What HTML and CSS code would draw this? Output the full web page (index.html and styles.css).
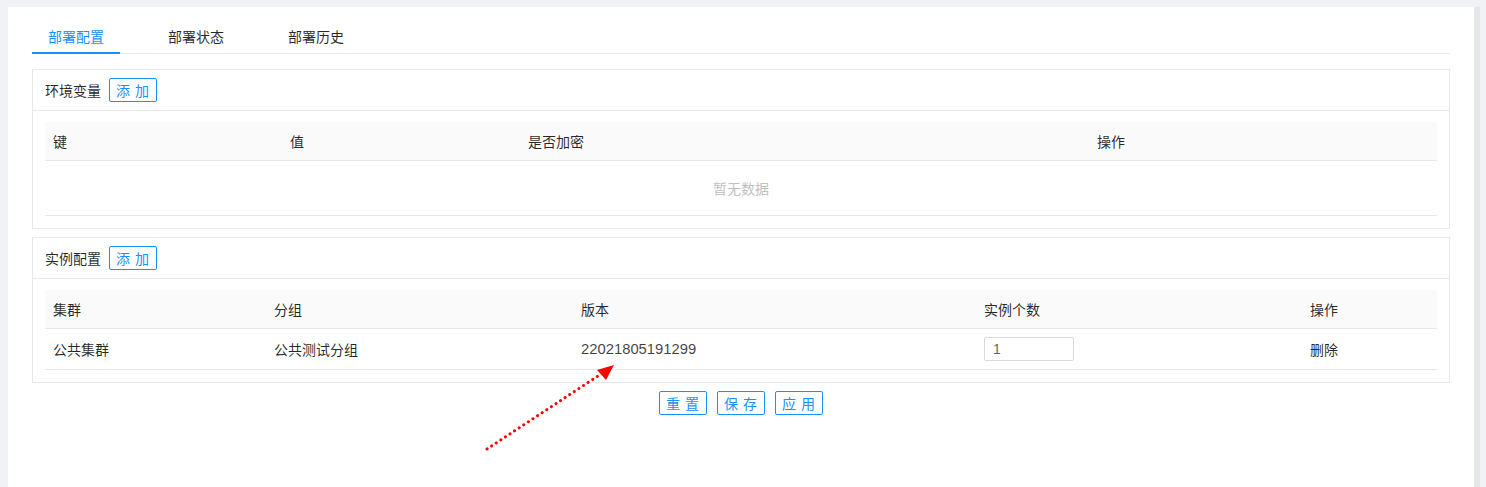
FILE: index.html
```html
<!DOCTYPE html>
<html lang="zh-CN">
<head>
<meta charset="utf-8">
<title>部署配置</title>
<link rel="stylesheet" href="styles.css">
</head>
<body>
<div class="page">
  <div class="panel">
    <div class="tabs">
      <div class="tab active">部署配置</div>
      <div class="tab">部署状态</div>
      <div class="tab">部署历史</div>
    </div>

    <div class="card">
      <div class="card-head">
        <span class="card-title">环境变量</span>
        <button class="btn">添 加</button>
      </div>
      <div class="card-body">
        <table class="tbl">
          <colgroup><col class="c1a"><col class="c1b"><col class="c1c"><col class="c1d"></colgroup>
          <thead><tr><th>键</th><th>值</th><th>是否加密</th><th>操作</th></tr></thead>
          <tbody><tr><td colspan="4" class="empty">暂无数据</td></tr></tbody>
        </table>
      </div>
    </div>

    <div class="card">
      <div class="card-head">
        <span class="card-title">实例配置</span>
        <button class="btn">添 加</button>
      </div>
      <div class="card-body">
        <table class="tbl">
          <colgroup><col class="c2a"><col class="c2b"><col class="c2c"><col class="c2d"><col class="c2e"></colgroup>
          <thead><tr><th>集群</th><th>分组</th><th>版本</th><th>实例个数</th><th>操作</th></tr></thead>
          <tbody><tr>
            <td>公共集群</td><td>公共测试分组</td><td class="num">22021805191299</td>
            <td><input class="inp" type="text" value="1"></td><td>删除</td>
          </tr></tbody>
        </table>
      </div>
    </div>

    <div class="actions">
      <button class="btn">重 置</button>
      <button class="btn">保 存</button>
      <button class="btn">应 用</button>
    </div>

    <svg class="arrow" width="1486" height="487" viewBox="0 0 1486 487">
      <line x1="487" y1="449" x2="601" y2="374" stroke="#ff0000" stroke-width="3" stroke-linecap="round" stroke-dasharray="0.1 5.4"/>
      <polygon points="614,365 597,370 606,380" fill="#ff0000"/>
    </svg>
  </div>
  <div class="scroll"></div>
</div>
</body>
</html>
```
FILE: styles.css
```css
* { box-sizing: border-box; }
html, body { margin: 0; padding: 0; }
body {
  background: #f0f2f5;
  font-family: "Noto Sans CJK SC", sans-serif;
  font-size: 14px;
  color: rgba(0,0,0,0.85);
  overflow: hidden;
}
.page {
  display: flex;
  padding: 7px 0 0 8px;
  height: 487px;
}
.panel {
  width: 1466px;
  background: #fff;
  padding: 10px 24px 0 24px;
  height: 480px;
}
.scroll {
  width: 6px;
  background: #e6e6e6;
  height: 480px;
}
.tabs {
  display: flex;
  border-bottom: 1px solid #e8e8e8;
}
.tab {
  position: relative;
  padding: 8px 16px 6px;
  margin-right: 32px;
  line-height: 22px;
  color: rgba(0,0,0,0.85);
}
.tab.active { color: #1890ff; }
.tab.active::after {
  content: "";
  position: absolute;
  left: 0; right: 0; bottom: -1px;
  height: 2px;
  background: #1890ff;
}
.card {
  border: 1px solid #e8e8e8;
  margin-top: 15px;
}
.card + .card { margin-top: 8px; }
.card-head {
  height: 41px;
  border-bottom: 1px solid #e8e8e8;
  display: flex;
  align-items: center;
  gap: 8px;
  padding: 0 12px;
}
.card-title { line-height: 22px; }
.btn {
  width: 48px;
  height: 24px;
  padding: 0;
  border: 1px solid #1890ff;
  border-radius: 2px;
  background: #fff;
  color: #1890ff;
  font-family: "Noto Sans CJK SC", sans-serif;
  font-size: 14px;
  line-height: 22px;
  letter-spacing: 1px;
}
.card-body { padding: 11px 12px 12px; }
.tbl {
  width: 100%;
  border-collapse: collapse;
  table-layout: fixed;
}
.tbl th, .tbl td {
  padding: 8px;
  line-height: 22px;
  text-align: left;
  font-weight: normal;
  border-bottom: 1px solid #e8e8e8;
  vertical-align: middle;
}
.tbl th { background: #fafafa; }
.tbl td.empty {
  text-align: center;
  color: #bfbfbf;
  padding: 16px;
}
.tbl td.num {
  font-family: "Liberation Sans", sans-serif;
  font-size: 14.8px;
  color: rgba(0,0,0,0.75);
}
.c1a { width: 237px; } .c1b { width: 238px; } .c1c { width: 569px; } .c1d { width: 348px; }
.c2a { width: 221px; } .c2b { width: 307px; } .c2c { width: 403px; } .c2d { width: 326px; } .c2e { width: 135px; }
.inp {
  display: block;
  width: 90px;
  height: 24px;
  border: 1px solid #d9d9d9;
  border-radius: 2px;
  padding: 0 8px;
  font-family: "Liberation Sans", sans-serif;
  font-size: 14px;
  color: rgba(0,0,0,0.65);
}
.actions {
  display: flex;
  justify-content: center;
  gap: 10px;
  margin-top: 8px;
}
.arrow {
  position: absolute;
  left: 0; top: 0;
  pointer-events: none;
}
```
